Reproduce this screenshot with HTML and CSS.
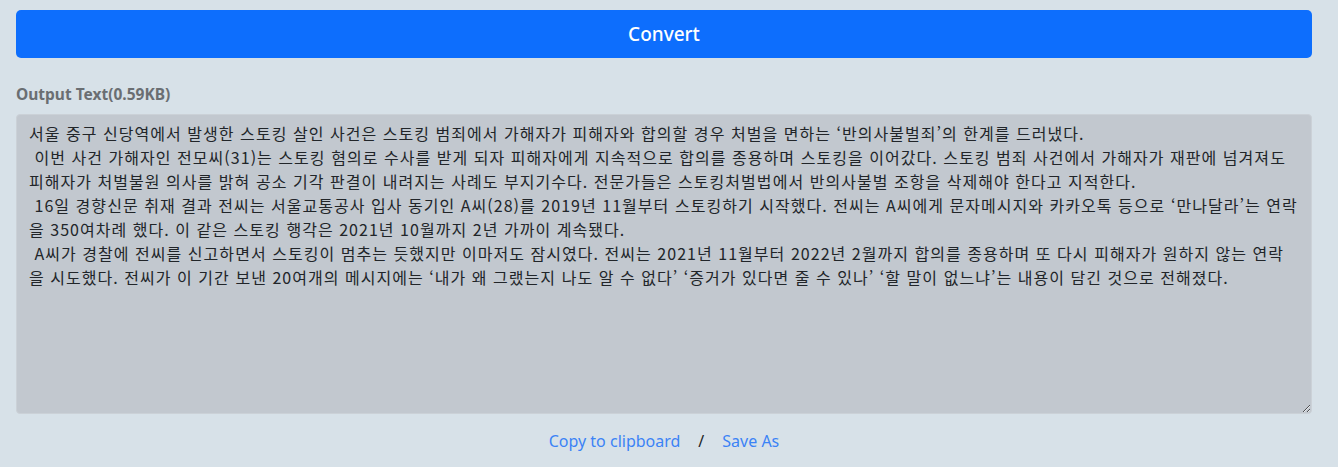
FILE: index.html
```html
<!DOCTYPE html>
<html lang="ko">
<head>
<meta charset="utf-8">
<title>Convert</title>
<link rel="stylesheet" href="styles.css">
</head>
<body>
<div class="page">
  <button class="btn-convert" type="button">Convert</button>
  <label class="out-label" for="out">Output Text(0.59KB)</label>
  <textarea id="out" class="out-text">서울 중구 신당역에서 발생한 스토킹 살인 사건은 스토킹 범죄에서 가해자가 피해자와 합의할 경우 처벌을 면하는 ‘반의사불벌죄’의 한계를 드러냈다.
 이번 사건 가해자인 전모씨(31)는 스토킹 혐의로 수사를 받게 되자 피해자에게 지속적으로 합의를 종용하며 스토킹을 이어갔다. 스토킹 범죄 사건에서 가해자가 재판에 넘겨져도 피해자가 처벌불원 의사를 밝혀 공소 기각 판결이 내려지는 사례도 부지기수다. 전문가들은 스토킹처벌법에서 반의사불벌 조항을 삭제해야 한다고 지적한다.
 16일 경향신문 취재 결과 전씨는 서울교통공사 입사 동기인 A씨(28)를 2019년 11월부터 스토킹하기 시작했다. 전씨는 A씨에게 문자메시지와 카카오톡 등으로 ‘만나달라’는 연락을 350여차례 했다. 이 같은 스토킹 행각은 2021년 10월까지 2년 가까이 계속됐다.
 A씨가 경찰에 전씨를 신고하면서 스토킹이 멈추는 듯했지만 이마저도 잠시였다. 전씨는 2021년 11월부터 2022년 2월까지 합의를 종용하며 또 다시 피해자가 원하지 않는 연락을 시도했다. 전씨가 이 기간 보낸 20여개의 메시지에는 ‘내가 왜 그랬는지 나도 알 수 없다’ ‘증거가 있다면 줄 수 있나’ ‘할 말이 없느냐’는 내용이 담긴 것으로 전해졌다.</textarea>
  <div class="actions">
    <a class="action-link" href="#">Copy to clipboard</a>
    <span class="sep">/</span>
    <a class="action-link" href="#">Save As</a>
  </div>
</div>
</body>
</html>
```
FILE: styles.css
```css
html, body {
  margin: 0;
  padding: 0;
  background: #d7e1e8;
}
body {
  font-family: "Segoe UI", "Noto Sans", "Noto Sans CJK KR", sans-serif;
  color: #212529;
  font-size: 16px;
  line-height: 1.5;
}
.page {
  padding: 10px 26px 0 16px;
  display: flex;
  flex-direction: column;
}
.btn-convert {
  display: block;
  width: 100%;
  height: 48px;
  border: 0;
  border-radius: 5px;
  background: #0d6efd;
  color: #fff;
  font-family: "Segoe UI", "Noto Sans", sans-serif;
  font-size: 19px;
  font-weight: 500;
  margin: 0 0 24px 0;
  padding: 0;
}
.out-label {
  display: block;
  font-size: 15.5px;
  font-weight: 700;
  color: #6a6e72;
  line-height: 24px;
  margin-bottom: 8px;
}
.out-text {
  display: block;
  box-sizing: border-box;
  width: 100%;
  height: 300px;
  margin: 0;
  padding: 6px 12px;
  border: 1px solid #cbd1d7;
  border-radius: 4px;
  background: #c2c8cf;
  color: #212529;
  font-family: "Segoe UI", "Noto Sans CJK KR", "Noto Sans", sans-serif;
  font-size: 16px;
  letter-spacing: 1.035px;
  line-height: 24px;
  resize: vertical;
  outline: none;
}
.actions {
  display: flex;
  justify-content: center;
  align-items: center;
  gap: 18px;
  margin-top: 15px;
  line-height: 24px;
  font-size: 16px;
}
.action-link {
  color: #3b83f6;
  text-decoration: none;
}
.sep {
  color: #212529;
}
```
